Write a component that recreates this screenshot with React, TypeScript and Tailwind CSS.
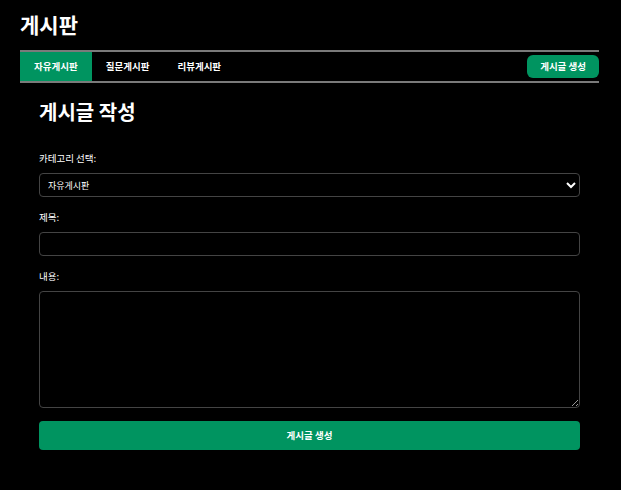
export default function App() {
  const tabs = ['자유게시판', '질문게시판', '리뷰게시판'];
  return (
    <div className="min-h-[490px] bg-black text-white font-['Noto_Sans_CJK_KR','Noto_Sans',sans-serif]">
      <div className="pl-5 pr-[22px] pt-[9px]">
        <h1 className="text-[21px] font-bold leading-[30px]">게시판</h1>
        <nav className="mt-[11px] flex items-center justify-between border-y-2 border-[#7a7a7a]">
          <div className="flex">
            {tabs.map((t, i) => (
              <a
                key={t}
                className={`px-[14px] h-[29px] flex items-center text-[9.5px] font-bold ${
                  i === 0 ? 'bg-[#009460]' : ''
                }`}
              >
                {t}
              </a>
            ))}
          </div>
          <button className="h-[23px] px-[13px] rounded-md bg-[#009460] text-[9.5px] font-bold">
            게시글 생성
          </button>
        </nav>
        <div className="px-[19px] pt-[15px]">
          <h2 className="text-[20px] font-bold leading-[28px]">게시글 작성</h2>
          <form className="mt-[25px] flex flex-col">
            <label className="text-[9.5px] leading-[14px]">카테고리 선택:</label>
            <select className="mt-[8px] h-[24px] rounded border border-[#444] bg-black px-[4px] text-[9px] text-white [color-scheme:dark]">
              <option>자유게시판</option>
              <option>질문게시판</option>
              <option>리뷰게시판</option>
            </select>
            <label className="mt-[13px] text-[9.5px] leading-[14px]">제목:</label>
            <input className="mt-[8px] h-[24px] rounded border border-[#444] bg-black px-[6px] text-[9px]" />
            <label className="mt-[13px] text-[9.5px] leading-[14px]">내용:</label>
            <textarea className="mt-[8px] h-[117px] rounded border border-[#444] bg-black px-[6px] text-[9px] [color-scheme:dark]" />
            <button
              type="button"
              className="mt-[13px] h-[29px] rounded bg-[#009460] text-[9.5px] font-bold"
            >
              게시글 생성
            </button>
          </form>
        </div>
      </div>
    </div>
  );
}
